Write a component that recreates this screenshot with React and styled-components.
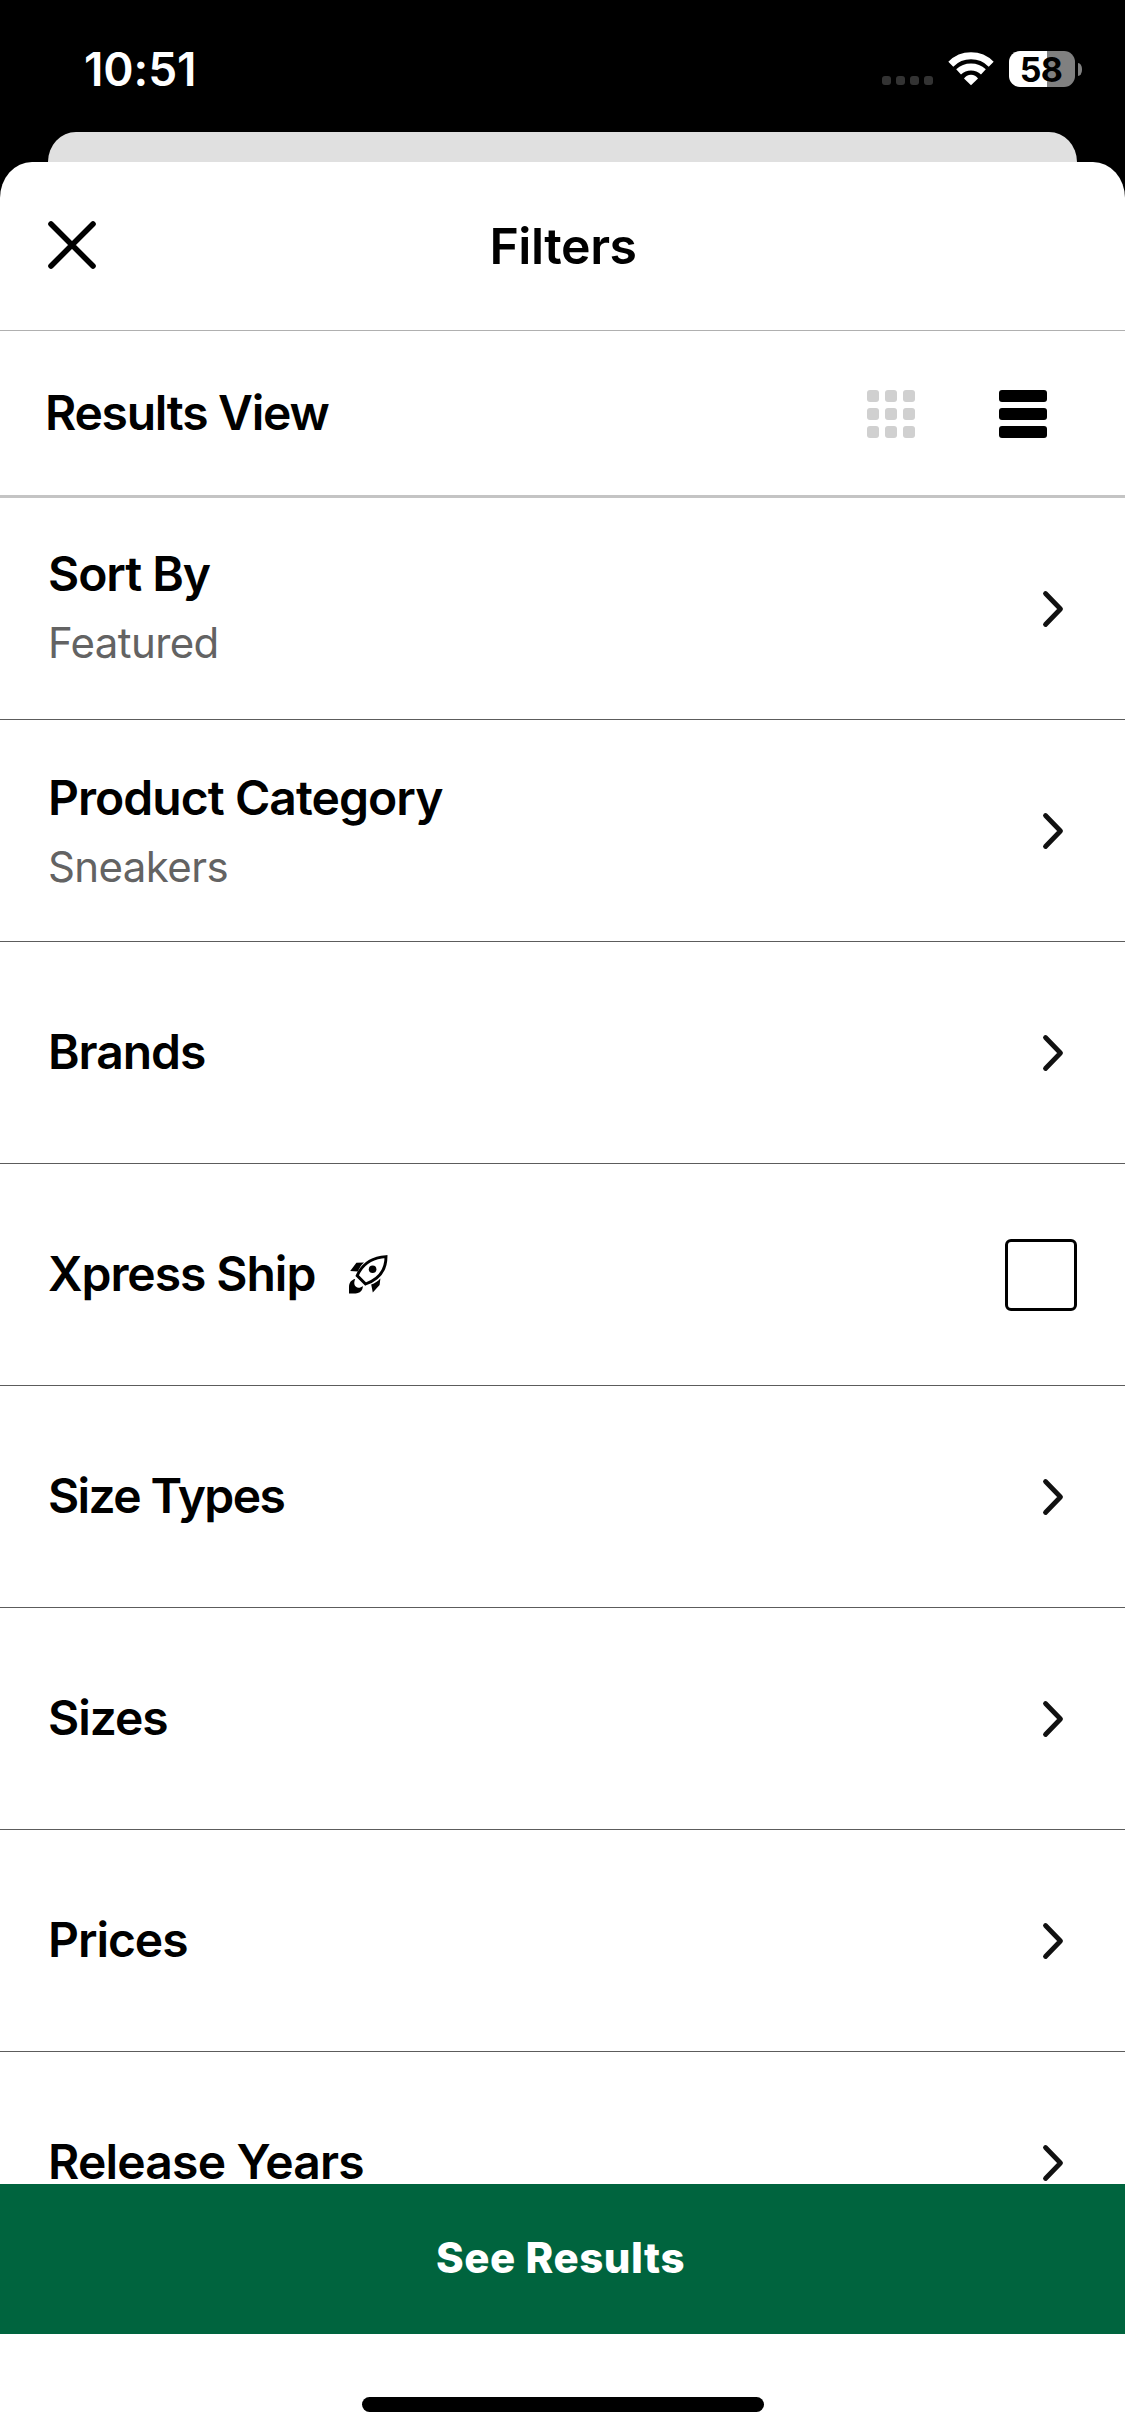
import React, { useState } from 'react';
import styled, { createGlobalStyle } from 'styled-components';

const GlobalStyle = createGlobalStyle`
  * {
    box-sizing: border-box;
  }

  body {
    margin: 0;
    background-color: #000000;
    font-family: Inter, 'Liberation Sans', sans-serif;
  }

  button {
    padding: 0;
    border: none;
    background: none;
    font-family: inherit;
    cursor: pointer;
  }

  svg {
    display: block;
  }
`;

const Screen = styled.div`
  display: flex;
  flex-direction: column;
  width: 1125px;
  height: 2436px;
  overflow: hidden;
  background-color: #000000;
`;

const StatusBar = styled.div`
  display: flex;
  justify-content: space-between;
  height: 132px;
  padding: 51px 43px 0 84px;
`;

const Time = styled.div`
  font-size: 46px;
  font-weight: 560;
  line-height: 36px;
  letter-spacing: -0.1px;
  color: #ffffff;
`;

const StatusIcons = styled.div`
  display: flex;
  height: 36px;
`;

const SignalDots = styled.div`
  display: flex;
  gap: 5px;
  margin: 25px 15px 0 0;
`;

const Dot = styled.span`
  width: 9px;
  height: 9px;
  border-radius: 3px;
  background-color: #333333;
`;

const Battery = styled.div`
  display: flex;
  align-items: center;
  gap: 3px;
  margin-left: 15px;
`;

const BatteryBody = styled.div`
  width: 66px;
  height: 36px;
  padding-right: 2px;
  border-radius: 11px;
  background: linear-gradient(to right, #ffffff ${(props) => props.$level}%, #808080 ${(props) => props.$level}%);
  font-size: 34px;
  font-weight: 680;
  line-height: 37px;
  letter-spacing: -0.6px;
  text-align: center;
  color: #000000;
`;

const BatteryCap = styled.span`
  width: 4px;
  height: 13px;
  border-radius: 0 4px 4px 0 / 0 6px 6px 0;
  background-color: #808080;
`;

const BackCard = styled.div`
  height: 30px;
  margin: 0 48px;
  border-radius: 28px 28px 0 0 / 30px 30px 0 0;
  background-color: #e0e0e0;
`;

const Sheet = styled.div`
  display: flex;
  flex: 1;
  flex-direction: column;
  min-height: 0;
  border-radius: 32px 32px 0 0 / 36px 36px 0 0;
  background-color: #ffffff;
`;

const Header = styled.div`
  display: grid;
  grid-template-columns: 48px 1fr 48px;
  align-items: center;
  height: 169px;
  padding: 0 48px;
  border-bottom: 1px solid #b0b0b0;
`;

const CloseButton = styled.button`
  width: 48px;
  height: 48px;
  margin-bottom: 2px;
`;

const HeaderTitle = styled.h1`
  margin: 0;
  padding-left: 1px;
  font-size: 50px;
  font-weight: 560;
  line-height: 60px;
  letter-spacing: -0.45px;
  text-align: center;
  color: #000000;
`;

const ResultsRow = styled.div`
  display: flex;
  align-items: center;
  justify-content: space-between;
  height: 167px;
  padding: 0 78px 0 45px;
  border-bottom: 3px solid #c4c4c4;
`;

const Title = styled.div`
  font-size: 48px;
  font-weight: 560;
  line-height: 60px;
  letter-spacing: ${(props) => props.$tracking || -1.05}px;
  color: #000000;
`;

const ViewToggle = styled.div`
  display: flex;
  gap: 84px;
  padding-top: 2px;
`;

const ViewButton = styled.button`
  display: grid;
  grid-template-columns: repeat(${(props) => props.$columns}, 1fr);
  gap: 6px;
  width: 48px;
  height: 48px;
  color: ${(props) => (props.$active ? '#000000' : '#d0d0d0')};
`;

const Cell = styled.span`
  height: 12px;
  border-radius: 3px;
  background-color: currentColor;
`;

const FilterList = styled.div`
  flex: 1;
  min-height: 0;
  overflow: hidden;
`;

const FilterRow = styled.div`
  display: flex;
  align-items: center;
  justify-content: space-between;
  height: 222px;
  padding: 1px 48px 0;
  border-bottom: 1px solid #5c5c5c;
`;

const RowText = styled.div`
  display: flex;
  flex-direction: column;
  gap: 9px;
  padding: ${(props) => (props.$lowered ? '2px 0 0' : '0 0 2px')};
`;

const RowTitle = styled.div`
  display: flex;
  align-items: center;
  gap: 34px;
`;

const Value = styled.div`
  font-size: 42px;
  font-weight: 400;
  line-height: 60px;
  letter-spacing: -0.6px;
  color: #636363;
`;

const Checkbox = styled.button`
  width: 72px;
  height: 72px;
  border: 3px solid #000000;
  border-radius: 6px;
  background-color: ${(props) => (props.$checked ? '#000000' : '#ffffff')};
`;

const SeeResultsButton = styled.button`
  height: 150px;
  padding: 0 4px 2px 0;
  background-color: #00643e;
  font-size: 42px;
  font-weight: 780;
  line-height: 60px;
  letter-spacing: 0.55px;
  color: #ffffff;
`;

const HomeArea = styled.div`
  display: flex;
  justify-content: center;
  height: 102px;
  padding-top: 63px;
`;

const HomeIndicator = styled.div`
  width: 402px;
  height: 15px;
  border-radius: 8px;
  background-color: #000000;
`;

const WifiIcon = () => (
  <svg width="46" height="36" viewBox="0 0 46 36" fill="none" stroke="#ffffff" strokeWidth="7">
    <path d="M2.8 13.2 A28.5 28.5 0 0 1 43.2 13.2" />
    <path d="M10.6 20.9 A18 18 0 0 1 35.4 20.9" />
    <path d="M23 34.2 L16 27.6 A8.2 8.2 0 0 1 30 27.6 Z" fill="#ffffff" stroke="none" />
  </svg>
);

const CloseIcon = () => (
  <svg width="48" height="48" viewBox="0 0 48 48" stroke="#000000" strokeWidth="5.6" strokeLinecap="round">
    <path d="M3 3 L45 45 M45 3 L3 45" />
  </svg>
);

const ChevronIcon = () => (
  <svg
    width="48"
    height="48"
    viewBox="0 0 48 48"
    fill="none"
    stroke="#111111"
    strokeWidth="4.8"
    strokeLinecap="round"
    strokeLinejoin="round"
  >
    <path d="M16.5 8.5 L31.5 24 L16.5 39.5" />
  </svg>
);

const RocketIcon = () => (
  <svg width="39" height="39" viewBox="0 0 39 39" fill="#000000">
    <path
      d="M37 1.6 C24 2.4 14 7.5 8.2 20.6 L16.6 29 C29 24.6 37 16 37 1.6 Z"
      fill="#ffffff"
      stroke="#000000"
      strokeWidth="2.9"
    />
    <circle cx="23.6" cy="14.2" r="3.8" />
    <path d="M1.2 16 L7.4 7.8 L15 7.4 C12 10.2 10.2 13 8.8 16.6 Z" />
    <path d="M31.4 23.6 L30.6 30 L23.8 37.4 L22.2 29.6 C26 28.4 28.8 26.4 31.4 23.6 Z" />
    <path d="M0 38.4 L0 32 C0 27.6 2.4 24.6 6.2 24 C4.2 28.6 5.6 32.2 9.6 32.8 C11 32.8 12.6 32 13.8 31 C14 35.4 11 38.4 6.4 38.4 Z" />
  </svg>
);

const filters = [
  { title: 'Sort By', value: 'Featured' },
  { title: 'Product Category', value: 'Sneakers', tracking: -0.95, lowered: true },
  { title: 'Brands' },
  { title: 'Xpress Ship', icon: <RocketIcon />, toggle: true },
  { title: 'Size Types', tracking: -1.6 },
  { title: 'Sizes' },
  { title: 'Prices' },
  { title: 'Release Years', tracking: -0.8 }
];

const App = () => {
  const [view, setView] = useState('list');
  const [xpress, setXpress] = useState(false);

  return (
    <Screen>
      <GlobalStyle />
      <StatusBar>
        <Time>10:51</Time>
        <StatusIcons>
          <SignalDots>
            {[0, 1, 2, 3].map((n) => (
              <Dot key={n} />
            ))}
          </SignalDots>
          <WifiIcon />
          <Battery>
            <BatteryBody $level={58}>58</BatteryBody>
            <BatteryCap />
          </Battery>
        </StatusIcons>
      </StatusBar>

      <BackCard />
      <Sheet>
        <Header>
          <CloseButton aria-label="Close">
            <CloseIcon />
          </CloseButton>
          <HeaderTitle>Filters</HeaderTitle>
        </Header>

        <ResultsRow>
          <Title $tracking={-1.25}>Results View</Title>
          <ViewToggle>
            <ViewButton $columns={3} $active={view === 'grid'} onClick={() => setView('grid')} aria-label="Grid view">
              {Array.from({ length: 9 }, (_, n) => (
                <Cell key={n} />
              ))}
            </ViewButton>
            <ViewButton $columns={1} $active={view === 'list'} onClick={() => setView('list')} aria-label="List view">
              {Array.from({ length: 3 }, (_, n) => (
                <Cell key={n} />
              ))}
            </ViewButton>
          </ViewToggle>
        </ResultsRow>

        <FilterList>
          {filters.map((filter) => (
            <FilterRow key={filter.title}>
              <RowText $lowered={filter.lowered}>
                <RowTitle>
                  <Title $tracking={filter.tracking}>{filter.title}</Title>
                  {filter.icon}
                </RowTitle>
                {filter.value && <Value>{filter.value}</Value>}
              </RowText>
              {filter.toggle ? (
                <Checkbox $checked={xpress} onClick={() => setXpress(!xpress)} aria-label={filter.title} />
              ) : (
                <ChevronIcon />
              )}
            </FilterRow>
          ))}
        </FilterList>

        <SeeResultsButton>See Results</SeeResultsButton>
        <HomeArea>
          <HomeIndicator />
        </HomeArea>
      </Sheet>
    </Screen>
  );
};

export default App;
